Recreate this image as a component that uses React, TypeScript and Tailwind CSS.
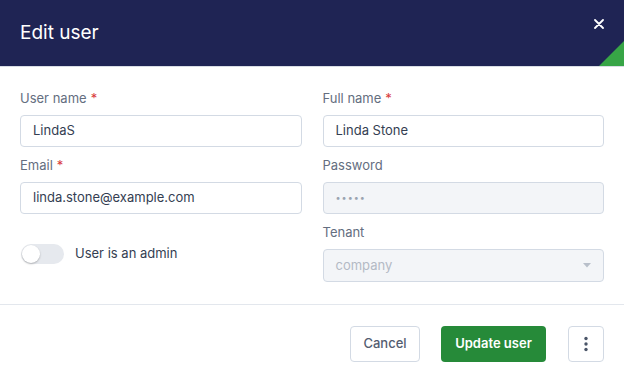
import React from "react";

function Label({ text, required }: { text: string; required?: boolean }) {
  return (
    <div className="text-[13px] leading-5 text-[#646e80] mb-[7px]">
      {text}
      {required && <span className="text-[#d93a3a] ml-1">*</span>}
    </div>
  );
}

function Input({ value }: { value: string }) {
  return (
    <div className="h-8 rounded border border-[#d3dae4] bg-white px-3 flex items-center text-[13px] text-[#343e52]">
      {value}
    </div>
  );
}

export default function App() {
  return (
    <div
      className="w-[624px] h-[384px] bg-white flex flex-col overflow-hidden"
      style={{ fontFamily: "Inter, 'Noto Sans', sans-serif" }}
    >
      <div className="relative h-[67px] shrink-0 bg-[#1f2454] border-b border-[#d8dde5] overflow-hidden flex items-center px-5">
        <div className="text-white text-[19px] leading-none -mt-[1px]">Edit user</div>
        <svg
          className="absolute right-[20px] top-[19px]"
          width="10"
          height="10"
          viewBox="0 0 10 10"
        >
          <path d="M1 1L9 9M9 1L1 9" stroke="white" strokeWidth="1.8" strokeLinecap="round" />
        </svg>
        <svg className="absolute right-0 bottom-0" width="25" height="25" viewBox="0 0 25 25">
          <polygon points="25,0 25,25 0,25" fill="#37a546" />
        </svg>
      </div>
      <div className="grid grid-cols-2 gap-x-[21px] px-5 pt-[21px] pb-[22px] border-b border-[#e3e7ed]">
        <div className="flex flex-col">
          <Label text="User name" required />
          <Input value="LindaS" />
          <div className="mt-2">
            <Label text="Email" required />
            <Input value="linda.stone@example.com" />
          </div>
          <div className="mt-[30px] flex items-center gap-[11px] pl-[1px]">
            <div className="w-[43px] h-[20px] rounded-full bg-[#e6e9ee] relative">
              <div className="absolute left-[1px] top-[1px] w-[18px] h-[18px] rounded-full bg-white shadow-[0_1px_2px_rgba(0,0,0,0.25)]" />
            </div>
            <div className="text-[13px] text-[#343e52]">User is an admin</div>
          </div>
        </div>
        <div className="flex flex-col">
          <Label text="Full name" required />
          <Input value="Linda Stone" />
          <div className="mt-2">
            <Label text="Password" />
            <div className="h-8 rounded border border-[#d3dae4] bg-[#f3f5f8] px-3 flex items-center text-[9px] tracking-[1px] text-[#9aa3b0]">
              •••••
            </div>
          </div>
          <div className="mt-2">
            <Label text="Tenant" />
            <div className="h-[33px] rounded border border-[#d3dae4] bg-[#f3f5f8] px-3 flex items-center justify-between text-[13px] text-[#b3bac5]">
              <span>company</span>
              <svg width="8" height="5" viewBox="0 0 8 5">
                <polygon points="0,0 8,0 4,4.5" fill="#b8bfca" />
              </svg>
            </div>
          </div>
        </div>
      </div>
      <div className="flex justify-end items-start gap-[21px] px-5 pt-[21px]">
        <div className="h-9 w-[70px] rounded border border-[#d3dae4] bg-white flex items-center justify-center text-[13px] font-medium text-[#535d70]">
          Cancel
        </div>
        <div className="h-9 w-[105px] rounded bg-[#268a39] flex items-center justify-center text-[13px] font-semibold text-white">
          Update user
        </div>
        <div className="h-9 w-[36px] ml-[1px] rounded border border-[#d3dae4] bg-white flex items-center justify-center">
          <svg width="4" height="18" viewBox="0 0 4 18">
            <circle cx="2" cy="3.5" r="1.7" fill="#4a5568" />
            <circle cx="2" cy="9" r="1.7" fill="#4a5568" />
            <circle cx="2" cy="14.5" r="1.7" fill="#4a5568" />
          </svg>
        </div>
      </div>
    </div>
  );
}
